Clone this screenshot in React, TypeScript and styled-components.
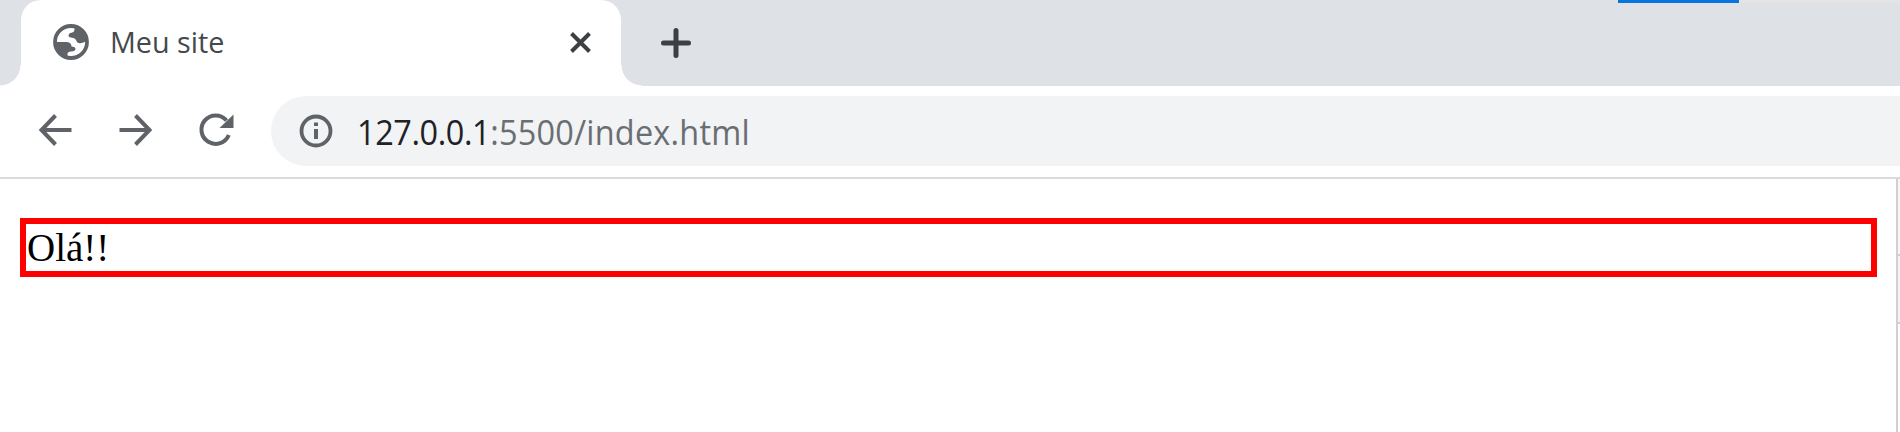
import React from "react";
import styled, { createGlobalStyle } from "styled-components";

const GlobalStyle = createGlobalStyle`
  *, *::before, *::after { box-sizing: border-box; }
  body { margin: 0; background: #fff; overflow: hidden; }
`;

const Window = styled.div`
  display: flex;
  flex-direction: column;
  width: 100%;
  height: 432px;
  background: #fff;
`;

const TabStrip = styled.header`
  position: relative;
  display: flex;
  height: 86px;
  padding-left: 20.5px;
  background: #dee1e6;
`;

const ProgressEdge = styled.div`
  position: absolute;
  top: 0;
  right: 0;
  display: flex;
  width: 282px;
  height: 3px;
  background: #e4e4e6;
`;

const ProgressFill = styled.div`
  width: 121px;
  height: 2.6px;
  background: #0875dc;
`;

const Tab = styled.div`
  position: relative;
  display: flex;
  align-items: center;
  width: 600.5px;
  height: 86px;
  padding: 0 29px 2px 32px;
  background: #fff;
  border-radius: 20px 20px 0 0;
`;

const TabFlare = styled.span<{ $side: "left" | "right" }>`
  position: absolute;
  bottom: 0;
  ${({ $side }) => $side}: -20.5px;
  width: 20.5px;
  height: 21px;
  background: radial-gradient(
    circle at ${({ $side }) => ($side === "left" ? "0 0" : "100% 0")},
    #dee1e6 20px,
    #fff 20.8px
  );
`;

const TabTitle = styled.span`
  flex: 1;
  margin-left: 21px;
  font: 30px/40px "Open Sans", sans-serif;
  color: #45494d;
  white-space: nowrap;
  transform: scaleX(0.958);
  transform-origin: left;
`;

const NewTab = styled.div`
  display: flex;
  align-items: center;
  padding: 0 0 0 38.5px;
`;

const Toolbar = styled.nav`
  display: flex;
  align-items: center;
  height: 93px;
  padding: 0 0 1px 36px;
  border-bottom: 2px solid #dadcdc;
`;

const NavButton = styled.span`
  display: flex;
  width: 80px;
  height: 42px;
`;

const AddressBar = styled.div`
  display: flex;
  align-items: center;
  flex: 1;
  height: 70px;
  margin-left: -5.5px;
  padding-left: 28px;
  background: #f1f3f4;
  border-radius: 35px 0 0 35px;
`;

const Url = styled.span`
  margin: -1px 0 0 24px;
  font: 35.5px/48px "Open Sans", sans-serif;
  letter-spacing: 0.25px;
  color: #6a6e73;
  white-space: nowrap;
  transform: scaleX(0.914);
  transform-origin: left;
`;

const Host = styled.span`
  letter-spacing: -0.44px;
  color: #202124;
`;

const Viewport = styled.div`
  display: flex;
  flex: 1;
`;

const Page = styled.main`
  flex: 1;
  padding: 39px 19.5px 0 20.4px;
`;

const Greeting = styled.p`
  height: 59px;
  margin: 0;
  padding-left: 0.6px;
  border: 6px solid #f00;
  font: 39px/47px "Liberation Serif", serif;
  color: #000;
`;

const SidePanel = styled.aside`
  display: flex;
  flex-direction: column;
  width: 4px;
  border-left: 2px solid #ced0d6;
`;

const PanelSection = styled.div<{ $height: number; $tone: string }>`
  height: ${({ $height }) => $height}px;
  background: ${({ $tone }) => $tone};
  border-bottom: 2px solid #ced0d6;
`;

const GlobeIcon = () => (
  <svg width="36" height="36" viewBox="0 0 36 36">
    <circle cx="18" cy="18" r="16" fill="none" stroke="#5f6368" strokeWidth="3.8" />
    <path
      fill="#5f6368"
      d="M21.500 2V6Q21 8.500 18.500 8.800Q15.500 9.200 15.500 12Q16 13.800 19 13.800Q22.500 14 23.500 17Q24.200 19.500 27.500 19.200Q30 19 34 17C34 9 29 3 21.500 2ZM2 18H13Q18.500 18 18.500 22.500Q22.500 22.500 22.500 25Q22 27.500 18 27.500Q14.500 27.500 14.500 30V34C7 33 2 27 2 18Z"
    />
  </svg>
);

const BackArrow = () => (
  <svg width="40" height="40" viewBox="0 0 40 40" fill="none" stroke="#5f6368" strokeWidth="4">
    <path d="M35.500 20H6M19.500 5.500L5.500 20L19.500 34.500" />
  </svg>
);

const ForwardArrow = () => (
  <svg width="40" height="40" viewBox="0 0 40 40" fill="none" stroke="#5f6368" strokeWidth="4">
    <path d="M3.500 20H33M19.500 5.500L33.500 20L19.500 34.500" />
  </svg>
);

const ReloadIcon = () => (
  <svg width="40" height="40" viewBox="0 0 40 40">
    <path d="M32.800 25A14.200 14.200 0 1 1 30.500 10.500" fill="none" stroke="#5f6368" strokeWidth="4" />
    <path d="M37.500 4.500V18H23.500Z" fill="#5f6368" />
  </svg>
);

const CloseIcon = () => (
  <svg width="24" height="24" viewBox="0 0 24 24" stroke="#3c4043" strokeWidth="4">
    <path d="M3.500 3.500L21.500 21.500M21.500 3.500L3.500 21.500" />
  </svg>
);

const PlusIcon = () => (
  <svg width="32" height="32" viewBox="0 0 32 32" stroke="#3c4043" strokeWidth="5" strokeLinecap="round">
    <path d="M3.500 16H28.500M16 3.500V28.500" />
  </svg>
);

const InfoIcon = () => (
  <svg width="34" height="34" viewBox="0 0 34 34">
    <circle cx="17" cy="17" r="14.500" fill="none" stroke="#5f6368" strokeWidth="3.800" />
    <path d="M15 8.500H19V12H15ZM15 15H19V25H15Z" fill="#5f6368" />
  </svg>
);

export default function App() {
  return (
    <>
      <GlobalStyle />
      <Window>
        <TabStrip>
          <Tab>
            <TabFlare $side="left" />
            <GlobeIcon />
            <TabTitle>Meu site</TabTitle>
            <CloseIcon />
            <TabFlare $side="right" />
          </Tab>
          <NewTab>
            <PlusIcon />
          </NewTab>
          <ProgressEdge>
            <ProgressFill />
          </ProgressEdge>
        </TabStrip>
        <Toolbar>
          <NavButton><BackArrow /></NavButton>
          <NavButton><ForwardArrow /></NavButton>
          <NavButton><ReloadIcon /></NavButton>
          <AddressBar>
            <InfoIcon />
            <Url><Host>127.0.0.1</Host>:5500/index.html</Url>
          </AddressBar>
        </Toolbar>
        <Viewport>
          <Page>
            <Greeting>Olá!!</Greeting>
          </Page>
          <SidePanel>
            <PanelSection $height={77} $tone="#f6f6f7" />
            <PanelSection $height={68} $tone="#f1f3f4" />
          </SidePanel>
        </Viewport>
      </Window>
    </>
  );
}
